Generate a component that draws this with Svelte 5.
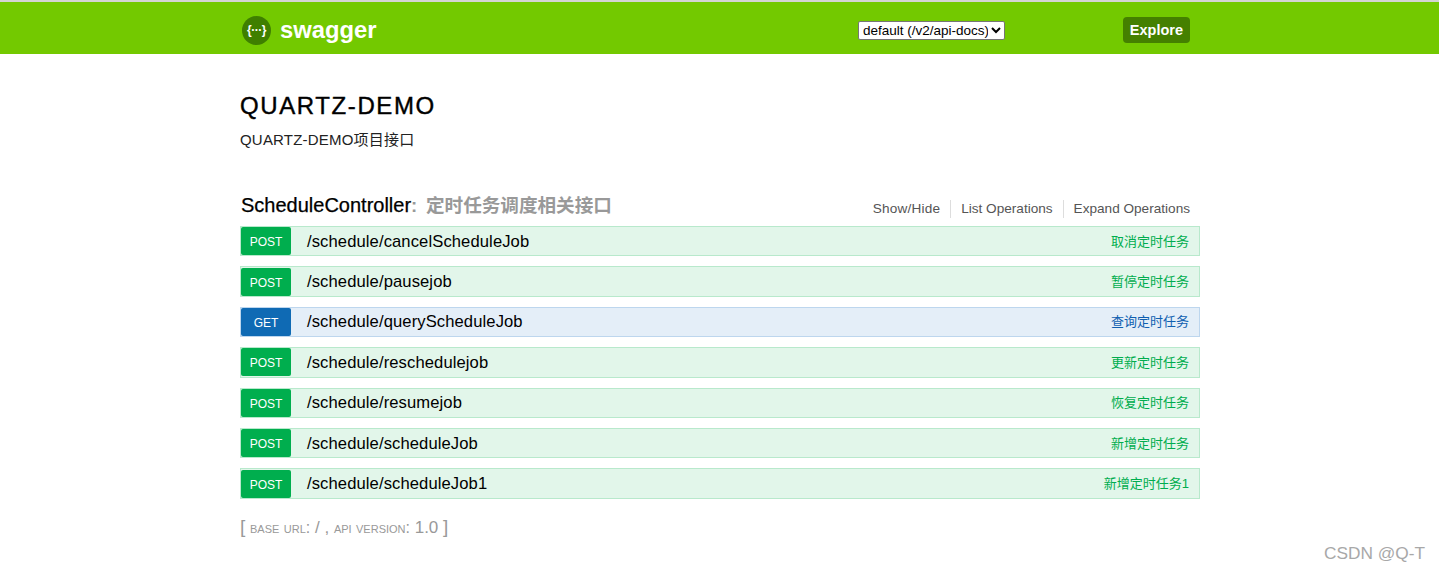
<script>
  const operations = [
    { method: "POST", path: "/schedule/cancelScheduleJob", summary: "取消定时任务" },
    { method: "POST", path: "/schedule/pausejob", summary: "暂停定时任务" },
    { method: "GET", path: "/schedule/queryScheduleJob", summary: "查询定时任务" },
    { method: "POST", path: "/schedule/reschedulejob", summary: "更新定时任务" },
    { method: "POST", path: "/schedule/resumejob", summary: "恢复定时任务" },
    { method: "POST", path: "/schedule/scheduleJob", summary: "新增定时任务" },
    { method: "POST", path: "/schedule/scheduleJob1", summary: "新增定时任务1" },
  ];
</script>

<header class="header">
  <div class="header__inner">
    <div class="logo">
      <span class="logo__icon">{"{···}"}</span>
      <span class="logo__text">swagger</span>
    </div>
    <select class="spec">
      <option>default (/v2/api-docs)</option>
    </select>
    <span class="explore">Explore</span>
  </div>
</header>

<main class="main">
  <h1 class="title">QUARTZ-DEMO</h1>
  <p class="desc">QUARTZ-DEMO项目接口</p>

  <div class="resource">
    <h2 class="resource__name">
      ScheduleController<span class="resource__note"> : 定时任务调度相关接口</span>
    </h2>
    <ul class="actions">
      <li>Show/Hide</li>
      <li>List Operations</li>
      <li>Expand Operations</li>
    </ul>
  </div>

  <div class="ops">
    {#each operations as op}
      <div class="op" class:op--get={op.method === "GET"}>
        <span class="op__method">{op.method}</span>
        <span class="op__path">{op.path}</span>
        <span class="op__summary">{op.summary}</span>
      </div>
    {/each}
  </div>

  <p class="base">
    <span class="base__bracket">[</span>
    <span class="base__label">base url:</span> <span class="base__value">/</span>
    <span class="base__value">,</span>
    <span class="base__label">api version:</span> <span class="base__value">1.0</span>
    <span class="base__bracket">]</span>
  </p>
</main>

<span class="watermark">CSDN @Q-T</span>

<style>
  :global(body) {
    margin: 0;
    background: #fff;
    font-family: "Liberation Sans", "Noto Sans CJK SC", sans-serif;
    color: #000;
    overflow: hidden;
  }

  .header {
    box-sizing: border-box;
    height: 54px;
    padding-top: 4px;
    background: #73c900;
    border-top: 2px solid #d4d4d4;
  }
  .header__inner {
    display: flex;
    align-items: center;
    width: 950px;
    height: 100%;
    margin-left: 240px;
  }

  .logo {
    display: flex;
    align-items: center;
    gap: 9px;
    width: 618px;
  }
  .logo__icon {
    display: flex;
    align-items: center;
    justify-content: center;
    width: 29px;
    height: 29px;
    margin-left: 2px;
    border-radius: 50%;
    background: #3f7f00;
    color: #fff;
    font-size: 12px;
    font-weight: bold;
    letter-spacing: -0.5px;
  }
  .logo__text {
    color: #fff;
    font-size: 23.8px;
    font-weight: bold;
  }

  .spec {
    width: 147px;
    height: 19px;
    padding: 0;
    background: #fff;
    border: 1px solid #767676;
    border-radius: 2px;
    font-family: "Liberation Sans", sans-serif;
    font-size: 13.5px;
    color: #000;
  }

  .explore {
    margin-left: auto;
    padding: 0 7px;
    height: 26px;
    line-height: 26px;
    border-radius: 4px;
    background: #458000;
    color: #fff;
    font-size: 14.5px;
    font-weight: bold;
  }

  .main {
    width: 960px;
    margin-left: 240px;
  }

  .title {
    margin: 0;
    padding-top: 37px;
    font-size: 24px;
    line-height: 30px;
    font-weight: normal;
    -webkit-text-stroke: 0.4px #000;
    letter-spacing: 1.6px;
  }
  .desc {
    margin: 9px 0 0;
    font-size: 15px;
    line-height: 20px;
    color: #222;
    letter-spacing: 0.2px;
  }

  .resource {
    display: flex;
    align-items: flex-end;
    justify-content: space-between;
    margin-top: 41px;
    padding-left: 1px;
    height: 30px;
  }
  .resource__name {
    margin: 0;
    font-size: 20px;
    line-height: 30px;
    font-weight: normal;
    -webkit-text-stroke: 0.25px #000;
  }
  .resource__note {
    color: #999;
    font-size: 18.6px;
    font-weight: bold;
    word-spacing: 3.5px;
    -webkit-text-stroke: 0;
  }
  .actions {
    display: flex;
    align-items: center;
    margin: 0 0 3px;
    padding: 0;
    list-style: none;
    font-size: 13.6px;
    color: #555;
  }
  .actions li {
    padding: 0 10px;
    line-height: 18px;
    border-left: 1px solid #ddd;
  }
  .actions li:first-child {
    border-left: none;
    letter-spacing: 0.2px;
  }

  .ops {
    display: flex;
    flex-direction: column;
    gap: 10px;
    margin-top: 5px;
  }
  .op {
    display: flex;
    align-items: center;
    box-sizing: border-box;
    height: 30.4px;
    background: #e2f6ea;
    border: 1px solid #b8e9cc;
    color: #00ad4e;
  }
  .op--get {
    background: #e4eef8;
    border-color: #bdd6ee;
    color: #0f5fb0;
  }
  .op__method {
    flex: none;
    width: 50px;
    height: 28px;
    line-height: 31px;
    border-radius: 2px;
    background: #00ae4e;
    color: #fff;
    font-size: 12px;
    text-align: center;
  }
  .op--get .op__method {
    background: #0f6ab4;
  }
  .op__path {
    margin-left: 16px;
    padding-top: 1px;
    color: #000;
    font-size: 16.6px;
    letter-spacing: 0.1px;
  }
  .op__summary {
    margin-left: auto;
    padding-right: 10px;
    padding-bottom: 2px;
    font-size: 13px;
  }

  .base {
    margin: 17px 0 0;
    font-size: 17px;
    line-height: 22px;
    color: #999;
  }
  .base__bracket {
    font-size: 19px;
  }
  .base__label {
    font-variant: small-caps;
    font-size: 15.9px;
  }

  .watermark {
    position: absolute;
    top: 543px;
    right: 14px;
    color: #a8a8a8;
    font-size: 17.3px;
    line-height: 20px;
  }
</style>
